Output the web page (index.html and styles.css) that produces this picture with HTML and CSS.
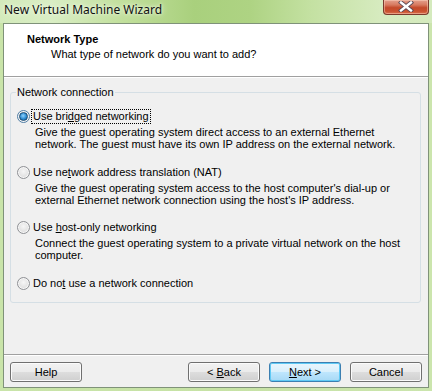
FILE: index.html
```html
<!DOCTYPE html>
<html>
<head>
<meta charset="utf-8">
<link rel="stylesheet" href="styles.css">
</head>
<body>
<div class="window">
  <div class="titlebar">
    <span class="title">New Virtual Machine Wizard</span>
    <div class="close">
      <svg width="16" height="11" viewBox="0 0 16 11"><path d="M3 1.5 L13 9.5 M13 1.5 L3 9.5" stroke="#5a4a56" stroke-width="4.2" stroke-linecap="square"/><path d="M3 1.5 L13 9.5 M13 1.5 L3 9.5" stroke="#ffffff" stroke-width="2.4" stroke-linecap="square"/></svg>
    </div>
  </div>
  <div class="client">
    <div class="header">
      <div class="h-title">Network Type</div>
      <div class="h-sub">What type of network do you want to add?</div>
    </div>
    <div class="sep"></div>
    <div class="content">
      <fieldset class="group">
        <legend class="group-label">Network connection</legend>
        <div class="option">
          <div class="opt-row"><span class="radio checked"></span><span class="lbl focus">Use bri<u>d</u>ged networking</span></div>
          <div class="desc">Give the guest operating system direct access to an external Ethernet<br>network. The guest must have its own IP address on the external network.</div>
        </div>
        <div class="option">
          <div class="opt-row"><span class="radio"></span><span class="lbl">Use ne<u>t</u>work address translation (NAT)</span></div>
          <div class="desc">Give the guest operating system access to the host computer's dial-up or<br>external Ethernet network connection using the host's IP address.</div>
        </div>
        <div class="option">
          <div class="opt-row"><span class="radio"></span><span class="lbl">Use <u>h</u>ost-only networking</span></div>
          <div class="desc">Connect the guest operating system to a private virtual network on the host<br>computer.</div>
        </div>
        <div class="option last">
          <div class="opt-row"><span class="radio"></span><span class="lbl">Do no<u>t</u> use a network connection</span></div>
        </div>
      </fieldset>
    </div>
    <div class="sep"></div>
    <div class="footer">
      <button class="btn">Help</button>
      <span class="spacer"></span>
      <button class="btn">&lt; <u>B</u>ack</button>
      <button class="btn default"><u>N</u>ext &gt;</button>
      <button class="btn">Cancel</button>
    </div>
  </div>
</div>
</body>
</html>
```
FILE: styles.css
```css
* { box-sizing: border-box; }
html, body { margin: 0; padding: 0; }
body {
  width: 432px;
  height: 391px;
  overflow: hidden;
  font-family: "Liberation Sans", Arial, sans-serif;
  font-size: 11px;
  color: #000;
}
.window {
  width: 432px;
  height: 391px;
  display: flex;
  flex-direction: column;
  background: linear-gradient(to right, #c9e4a9 0%, #c6e2a5 50%, #cbe5ad 100%);
}
.titlebar {
  height: 23px;
  display: flex;
  align-items: flex-start;
  background: linear-gradient(to right, #d3eabb 0%, #d9eec4 12%, #c2e09d 28%, #a9d07d 45%, #aed383 58%, #c4e1a2 72%, #d6ebbf 88%, #d4eabd 100%);
}
.title {
  font-family: "Noto Sans", "Liberation Sans", sans-serif;
  font-size: 12px;
  line-height: 16px;
  padding: 2px 0 0 4px;
  color: #111;
  text-shadow: 0 0 6px #eef7e4, 0 0 3px #eef7e4;
}
.close {
  margin-left: auto;
  margin-right: 3px;
  width: 46px;
  height: 15px;
  border: 1px solid #7a3a2c;
  border-top: none;
  border-radius: 0 0 4px 4px;
  background: linear-gradient(to bottom, #e4a08c 0%, #d77a60 35%, #c44a2a 55%, #c9512f 80%, #d8704e 100%);
  box-shadow: inset 0 0 0 1px rgba(255, 220, 200, 0.45);
  display: flex;
  align-items: center;
  justify-content: center;
}
.close svg { display: block; margin-top: -1px; }
.client {
  margin: 0 3px 3px 3px;
  height: 365px;
  border: 1px solid #7f9279;
  background: #f0f0f0;
  display: flex;
  flex-direction: column;
}
.header {
  height: 52px;
  background: #ffffff;
  padding: 8px 0 0 23px;
}
.h-title {
  font-weight: bold;
  line-height: 14px;
}
.h-sub {
  margin-top: 1px;
  padding-left: 24px;
  line-height: 14px;
}
.sep {
  height: 2px;
  border-top: 1px solid #a0a0a0;
  border-bottom: 1px solid #ffffff;
}
.content {
  flex: 1;
  padding: 8px 7px 0 6px;
}
.group {
  margin: 0;
  border: 1px solid #d5dfe5;
  border-radius: 3px;
  padding: 11px 6px 12px 5px;
  min-width: 0;
}
.group-label {
  padding: 0 1px;
  line-height: 13px;
}
.option { margin-bottom: 15.5px; }
.option.last { margin-bottom: 0; }
.opt-row {
  display: flex;
  align-items: center;
  height: 13px;
}
.radio {
  width: 13px;
  height: 13px;
  margin: 0 2px 0 1px;
  border-radius: 50%;
  border: 1px solid #8f9195;
  background: radial-gradient(circle at 50% 40%, #f6f6f6 0%, #e2e2e2 60%, #d6d6d6 100%);
  box-shadow: inset 0 0 0 1px #f7f7f7;
  display: flex;
  align-items: center;
  justify-content: center;
  flex: none;
}
.radio.checked { border-color: #4f7ea6; }
.radio.checked::after {
  content: "";
  width: 7px;
  height: 7px;
  border-radius: 50%;
  border: 1px solid #1c4f78;
  background: radial-gradient(circle at 45% 40%, #8fd3ff 0%, #2c8ad0 55%, #145a8f 100%);
}
.lbl {
  line-height: 13px;
  padding: 0 1px;
  outline: none;
}
.lbl.focus {
  outline: 1px dotted #000;
  outline-offset: 0;
}
.desc {
  margin: 3px 0 0 19px;
  line-height: 12px;
  white-space: nowrap;
}
.footer {
  height: 31px;
  padding: 6px 6px 0 6px;
  display: flex;
  align-items: flex-start;
}
.spacer { flex: 1; }
.btn {
  width: 72px;
  height: 20px;
  margin: 0 0 0 9px;
  padding: 0;
  font-family: "Liberation Sans", Arial, sans-serif;
  font-size: 11px;
  color: #000;
  border: 1px solid #707070;
  border-radius: 3px;
  background: linear-gradient(to bottom, #f2f2f2 0%, #ebebeb 48%, #dddddd 52%, #cfcfcf 100%);
  box-shadow: inset 0 0 0 1px #fbfbfb;
}
.btn:first-child { margin-left: 0; }
.btn.default {
  border-color: #3c7fb1;
  background: linear-gradient(to bottom, #eaf6fd 0%, #d9f0fc 48%, #bee6fd 52%, #a7d9f5 100%);
  box-shadow: inset 0 0 0 1px #5fcaf5;
}
```
